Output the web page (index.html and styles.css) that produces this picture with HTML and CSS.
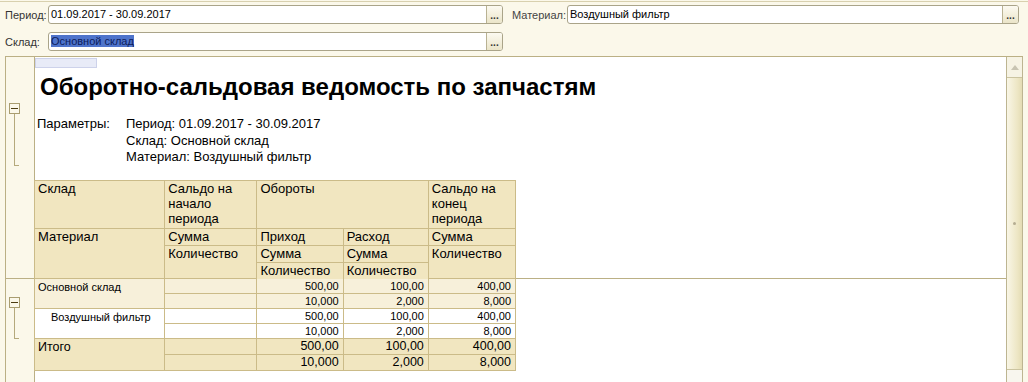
FILE: index.html
```html
<!DOCTYPE html>
<html>
    <head>
        <meta charset="utf-8">
        <title>Оборотно-сальдовая ведомость по запчастям</title>
        <link rel="stylesheet" href="styles.css">
    </head>
    <body>
        <div class="topline"></div>
        <div class="form">
            <div class="form_row">
                <span class="lbl">Период:</span>
                <div class="field field_period"><span class="field_text">01.09.2017 - 30.09.2017</span><span class="choose">...</span></div>
                <span class="lbl lbl_mat">Материал:</span>
                <div class="field field_mat"><span class="field_text">Воздушный фильтр</span><span class="choose">...</span></div>
            </div>
            <div class="form_row">
                <span class="lbl">Склад:</span>
                <div class="field field_period"><span class="field_text"><span class="sel">Основной склад</span></span><span class="choose">...</span></div>
            </div>
        </div>
        <div class="report">
            <div class="sheet">
                <!-- title + header area -->
                <div class="section section_head">
                    <div class="gutter">
                        <div class="grp grp_head"><div class="grp_box"></div><div class="grp_line"></div></div>
                    </div>
                    <div class="cells">
                        <div class="cur_cell"></div>
                        <h1 class="rep_title">Оборотно-сальдовая ведомость по запчастям</h1>
                        <div class="params">
                            <span>Параметры:</span>
                            <span>Период: 01.09.2017 - 30.09.2017</span>
                            <span></span>
                            <span>Склад: Основной склад</span>
                            <span></span>
                            <span>Материал: Воздушный фильтр</span>
                        </div>
                        <table class="rep_table head_table">
                            <colgroup><col class="c1"><col class="c2"><col class="c3"><col class="c4"><col class="c5"></colgroup>
                            <tr class="h_row1">
                                <td>Склад</td>
                                <td>Сальдо на<br>начало<br>периода</td>
                                <td colspan="2">Обороты</td>
                                <td>Сальдо на<br>конец<br>периода</td>
                            </tr>
                            <tr class="h_row">
                                <td rowspan="3">Материал</td>
                                <td>Сумма</td>
                                <td>Приход</td>
                                <td>Расход</td>
                                <td>Сумма</td>
                            </tr>
                            <tr class="h_row">
                                <td rowspan="2">Количество</td>
                                <td>Сумма</td>
                                <td>Сумма</td>
                                <td rowspan="2">Количество</td>
                            </tr>
                            <tr class="h_row last">
                                <td>Количество</td>
                                <td>Количество</td>
                            </tr>
                        </table>
                    </div>
                </div>
                <!-- data rows -->
                <div class="section section_body">
                    <div class="gutter">
                        <div class="grp grp_body"><div class="grp_box"></div><div class="grp_line"></div></div>
                    </div>
                    <div class="cells">
                        <table class="rep_table body_table">
                            <colgroup><col class="c1"><col class="c2"><col class="c3"><col class="c4"><col class="c5"></colgroup>
                            <tr class="g_row first">
                                <td rowspan="2" class="name">Основной склад</td>
                                <td></td><td class="num">500,00</td><td class="num">100,00</td><td class="num">400,00</td>
                            </tr>
                            <tr class="g_row">
                                <td></td><td class="num">10,000</td><td class="num">2,000</td><td class="num">8,000</td>
                            </tr>
                            <tr class="d_row">
                                <td rowspan="2" class="name indent">Воздушный фильтр</td>
                                <td></td><td class="num">500,00</td><td class="num">100,00</td><td class="num">400,00</td>
                            </tr>
                            <tr class="d_row">
                                <td></td><td class="num">10,000</td><td class="num">2,000</td><td class="num">8,000</td>
                            </tr>
                            <tr class="t_row">
                                <td rowspan="2" class="name">Итого</td>
                                <td></td><td class="num">500,00</td><td class="num">100,00</td><td class="num">400,00</td>
                            </tr>
                            <tr class="t_row">
                                <td></td><td class="num">10,000</td><td class="num">2,000</td><td class="num">8,000</td>
                            </tr>
                        </table>
                    </div>
                </div>
            </div>
            <div class="vscroll">
                <div class="sb_up"><span class="sb_arrow"></span></div>
                <div class="sb_track"><span class="sb_grip"></span></div>
                <div class="sb_bottom"></div>
            </div>
        </div>
    </body>
</html>
```

FILE: styles.css
```css
body {
	margin: 0;
	width: 1028px;
	height: 382px;
	overflow: hidden;
	background: #fbf8ea;
	font-family: "Liberation Sans", Arial, sans-serif;
	color: #000;
}
.topline {
	height: 1px;
	margin-top: 1px;
	background: #d8d0ae;
}
/* form with filter fields */
.form {
	padding: 3px 0 0 5px;
}
.form_row {
	display: flex;
	align-items: center;
	height: 19px;
}
.form_row + .form_row {
	margin-top: 8px;
}
.lbl {
	width: 43px;
	font-size: 11px;
	color: #333;
}
.lbl_mat {
	width: 55px;
	margin-left: 9px;
	color: #444;
}
.field {
	display: flex;
	height: 19px;
	box-sizing: border-box;
	border: 1px solid #aaa489;
	border-radius: 3px;
	background: #fff;
}
.field_period {
	width: 455px;
}
.field_mat {
	width: 452px;
}
.field_text {
	flex: 1;
	font-size: 11px;
	line-height: 17px;
	padding-left: 2px;
	white-space: nowrap;
}
.sel {
	background: #4f74cb;
	color: #0d1d5c;
}
.choose {
	width: 15px;
	border-left: 1px solid #b9b293;
	border-radius: 0 2px 2px 0;
	background: linear-gradient(#fcfaf1, #ebe5c9);
	font-size: 10px;
	font-weight: bold;
	line-height: 20px;
	text-align: center;
	color: #333;
}
/* report sheet */
.report {
	display: flex;
	height: 330px;
	margin: 5px 5px 0 5px;
	border-top: 1px solid #bbb085;
	border-left: 1px solid #bbb085;
}
.sheet {
	flex: 1;
}
.section {
	display: flex;
}
.section_head {
	height: 221px;
	border-bottom: 1px solid #bbb085;
}
.section_body {
	height: 120px;
}
.gutter {
	width: 28px;
	border-right: 1px solid #bbb085;
	background: #fbf8ea;
}
.cells {
	flex: 1;
	background: #fff;
}
/* group markers in the gutter */
.grp {
	margin-left: 3px;
}
.grp_head {
	margin-top: 46px;
}
.grp_body {
	margin-top: 18px;
}
.grp_box {
	position: relative;
	width: 9px;
	height: 9px;
	border: 1px solid #a99d70;
	background: #fbf8ea;
}
.grp_box::after {
	content: "";
	position: absolute;
	left: 1px;
	top: 4px;
	width: 7px;
	height: 1px;
	background: #4c3c12;
}
.grp_line {
	width: 4px;
	margin-left: 5px;
	border-left: 1px solid #b5a97c;
	border-bottom: 1px solid #b5a97c;
}
.grp_head .grp_line {
	height: 51px;
}
.grp_body .grp_line {
	height: 30px;
}
.cur_cell {
	width: 60px;
	height: 8px;
	margin-top: 1px;
	border: 1px solid #cdd2ea;
	background: #e8ebf7;
}
.rep_title {
	margin: 6px 0 0 5px;
	font-size: 24px;
	line-height: 26px;
	font-weight: bold;
	white-space: nowrap;
}
.params {
	display: grid;
	grid-template-columns: 89px auto;
	margin: 16px 0 0 2px;
	font-size: 13px;
	line-height: 16.5px;
}
/* report table */
.rep_table {
	border-collapse: collapse;
	table-layout: fixed;
	width: 482px;
	margin-left: -1px;
}
.c1 { width: 130px; }
.c2 { width: 92px; }
.c3 { width: 86px; }
.c4 { width: 85px; }
.c5 { width: 87px; }
.rep_table td {
	border: 1px solid #cbbb88;
	padding: 0 3px 0 3px;
	vertical-align: top;
	white-space: nowrap;
}
.head_table {
	margin-top: 14px;
	background: #f1e6c0;
	font-size: 13px;
	line-height: 15px;
}
.head_table .h_row1 td {
	height: 47px;
}
.head_table .h_row td {
	height: 16px;
}
.head_table .last td {
	border-bottom: none;
}
.body_table td {
	font-size: 11px;
	line-height: 14px;
	height: 14px;
}
.body_table .first td {
	border-top: none;
}
.body_table .num {
	text-align: right;
	padding-right: 4px;
}
.body_table .name {
	padding-top: 1px;
}
.g_row td {
	background: #f7f0da;
}
.d_row td {
	background: #fff;
}
.indent {
	padding-left: 16px !important;
}
.t_row td {
	background: #f1e6c0;
	font-size: 12.5px;
	line-height: 15px;
	height: 15px;
}
/* vertical scrollbar */
.vscroll {
	display: flex;
	flex-direction: column;
	width: 15px;
	border-left: 1px solid #bdb591;
	border-right: 1px solid #bdb591;
}
.sb_up {
	display: flex;
	align-items: center;
	justify-content: center;
	height: 20px;
	border-bottom: 1px solid #cbc4a0;
	background: #f6f3e4;
}
.sb_arrow {
	width: 0;
	height: 0;
	border-left: 4px solid transparent;
	border-right: 4px solid transparent;
	border-bottom: 5px solid #c8c4b2;
}
.sb_track {
	display: flex;
	align-items: center;
	justify-content: center;
	height: 291px;
	background: linear-gradient(90deg, #f9f6e6, #ede6c4 70%, #e4dcb4);
}
.sb_grip {
	width: 3px;
	height: 3px;
	border-radius: 50%;
	background: #b5ad92;
}
.sb_bottom {
	flex: 1;
	border-top: 1px solid #cbc4a0;
	background: #f8f6ee;
}
```
